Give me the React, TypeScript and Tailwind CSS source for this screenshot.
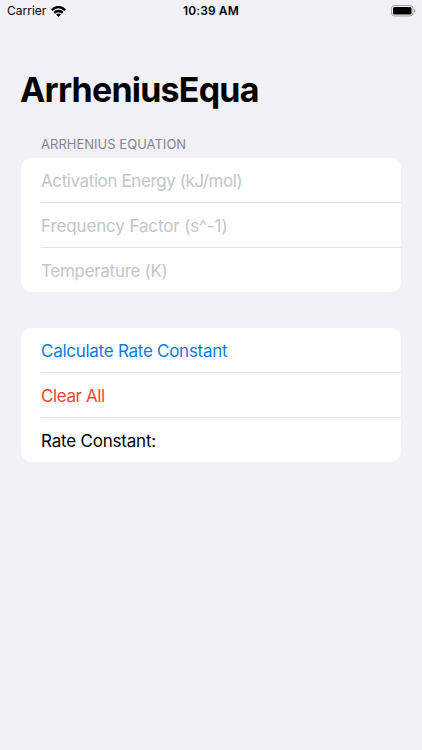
import React from "react";

const fields = [
  { id: "energy", label: "Activation Energy (kJ/mol)", spacing: "tracking-[-0.4px]" },
  { id: "factor", label: "Frequency Factor (s^-1)", spacing: "tracking-[-0.13px]" },
  { id: "temperature", label: "Temperature (K)", spacing: "tracking-[-0.3px]" },
];

export default function App() {
  return (
    <main className="h-[750px] w-[422px] overflow-hidden bg-[#f2f1f7] font-['Inter',sans-serif] text-black">
      <StatusBar />
      <h1 className="mt-[46px] pl-5 text-[34px] leading-[44px] font-bold tracking-[-0.78px]">ArrheniusEqua</h1>
      <h2 className="mt-[23px] pl-[41px] text-[13px] leading-[18px] tracking-[0.02px] text-[#85858b]">ARRHENIUS EQUATION</h2>
      <section className="mx-[21px] mt-[5px] rounded-[10px] bg-white pl-5">
        {fields.map((field) => (
          <div key={field.id} className={`flex h-[45px] items-center border-b border-[#e3e3e5] pt-px text-[17px] leading-6 text-[#c5c5c7] last:h-11 last:border-0 ${field.spacing}`}>
            {field.label}
          </div>
        ))}
      </section>
      <section className="mx-[21px] mt-9 rounded-[10px] bg-white pl-5 text-[17px] leading-6">
        <button className="flex h-[45px] w-full items-center border-b border-[#e3e3e5] pt-px tracking-[-0.27px] text-[#0f7be0]">Calculate Rate Constant</button>
        <button className="flex h-[45px] w-full items-center border-b border-[#e3e3e5] pt-px tracking-[-0.4px] text-[#f04438]">Clear All</button>
        <div className="flex h-11 items-center pt-px tracking-[-0.2px]">Rate Constant:</div>
      </section>
    </main>
  );
}

function StatusBar() {
  return (
    <header className="grid h-[22px] grid-cols-3 items-center pr-[6px] pl-[7px] text-[12px]">
      <div className="flex items-center gap-[5px]">
        <span>Carrier</span>
        <svg width="15" height="11" viewBox="0 0 15 11" fill="none" stroke="black" strokeWidth="2.4">
          <path d="M0.8 4.1Q7.5-1.9 14.2 4.1M3.2 6.8Q7.5 3 11.8 6.8" />
          <path d="M5.1 8.5Q7.5 6.3 9.9 8.5L7.5 10.9Z" fill="black" stroke="none" />
        </svg>
      </div>
      <span className="-ml-px text-center font-semibold tracking-[0.1px]">10:39 AM</span>
      <svg className="justify-self-end" width="25" height="12" viewBox="0 0 25 12">
        <rect x="0.5" y="0.5" width="21.5" height="10.5" rx="3" fill="none" stroke="#a0a0a4" />
        <rect x="2" y="2" width="18.5" height="7.5" rx="1.5" />
        <path d="M23 3.8Q26 5.8 23 7.8Z" fill="#a0a0a4" />
      </svg>
    </header>
  );
}
